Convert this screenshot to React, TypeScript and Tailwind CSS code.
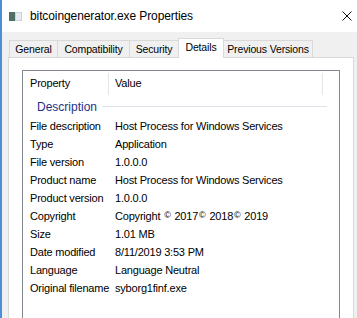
import React from 'react';

const tabs = [
    { label: 'General', w: 'w-[48px]', cls: 'border-l border-t h-[17px] pt-[2px]' },
    { label: 'Compatibility', w: 'w-[72px]', cls: 'border-l border-t h-[17px] pt-[2px]' },
    { label: 'Security', w: 'w-[49px]', cls: 'border-l border-t h-[17px] pt-[2px]' },
    { label: 'Details', w: 'w-[46px]', cls: 'border-l border-t border-r h-[20px] -mb-px bg-white' },
    { label: 'Previous Versions', w: 'w-[89px]', cls: 'border-t border-r h-[17px] pt-[2px]' },
];

const C = () => <span className="text-[9px] align-[2px] mx-[1px]">©</span>;

const rows: { name: string; value: React.ReactNode }[] = [
    { name: 'File description', value: 'Host Process for Windows Services' },
    { name: 'Type', value: 'Application' },
    { name: 'File version', value: '1.0.0.0' },
    { name: 'Product name', value: 'Host Process for Windows Services' },
    { name: 'Product version', value: '1.0.0.0' },
    { name: 'Copyright', value: <>Copyright <C /> 2017<C /> 2018<C /> 2019</> },
    { name: 'Size', value: '1.01 MB' },
    { name: 'Date modified', value: '8/11/2019 3:53 PM' },
    { name: 'Language', value: 'Language Neutral' },
    { name: 'Original filename', value: 'syborg1finf.exe' },
];

export default function App() {
    return (
        <div className="w-[357px] h-[318px] overflow-hidden flex bg-[#f0f0f0] text-black font-['Liberation_Sans',Arial,sans-serif]">
            {/* window accent edge */}
            <div className="w-[2px] shrink-0 bg-[#4b8fd9]" />
            <div className="flex-1 flex flex-col min-w-0">
                {/* Title bar */}
                <div className="h-[32px] shrink-0 bg-white flex items-center">
                    <svg className="ml-[7px]" width="13" height="9" viewBox="0 0 13 9">
                        <rect x="0" y="0" width="13" height="9" fill="#c9d5de" />
                        <rect x="0" y="0" width="6" height="9" fill="#4f7068" />
                        <rect x="7" y="1" width="5" height="7" fill="#e4ecf2" />
                    </svg>
                    <span className="ml-[8px] text-[12px] tracking-[-0.1px] text-[#000]">bitcoingenerator.exe Properties</span>
                    <svg className="ml-auto mr-[5px]" width="10" height="10" viewBox="0 0 10 10">
                        <path d="M0.5 0.5 L9.5 9.5 M9.5 0.5 L0.5 9.5" stroke="#111" strokeWidth="1" />
                    </svg>
                </div>

                {/* Tabs */}
                <div className="h-[25px] shrink-0 flex items-end pl-[7px] relative z-10">
                    {tabs.map((t) => (
                        <div
                            key={t.label}
                            className={`${t.w} ${t.cls} border-[#d9d9d9] flex justify-center text-[10.5px] tracking-[-0.15px] leading-[13px]`}
                        >
                            <span className={t.label === 'Details' ? 'pt-[2px]' : ''}>{t.label}</span>
                        </div>
                    ))}
                </div>

                {/* Tab panel */}
                <div className="flex-1 ml-[6px] mr-[3px] bg-white border border-b-0 border-[#d9d9d9] flex flex-col">
                    <div className="flex-1 mt-[12px] mx-[13px] border border-b-0 border-[#828790] flex flex-col text-[11px] tracking-[-0.2px]">
                        {/* Header */}
                        <div className="h-[25px] flex items-center shrink-0">
                            <div className="w-[85px] pl-[7px]">Property</div>
                            <div className="w-px h-[22px] bg-[#e5e5e5]" />
                            <div className="w-[213px] pl-[6px]">Value</div>
                            <div className="w-px h-[22px] bg-[#e5e5e5]" />
                        </div>

                        {/* Group */}
                        <div className="h-[21px] flex items-center shrink-0">
                            <span className="pl-[14px] text-[12px] tracking-normal text-[#1e3287]">Description</span>
                            <div className="flex-1 h-px ml-[5px] mr-[12px] bg-[#dde2ea]" />
                        </div>

                        {rows.map((r) => (
                            <div key={r.name} className="h-[18px] flex items-center shrink-0 whitespace-nowrap">
                                <div className="w-[92px] pl-[7px]">{r.name}</div>
                                <div>{r.value}</div>
                            </div>
                        ))}
                    </div>
                </div>
            </div>
        </div>
    );
}
